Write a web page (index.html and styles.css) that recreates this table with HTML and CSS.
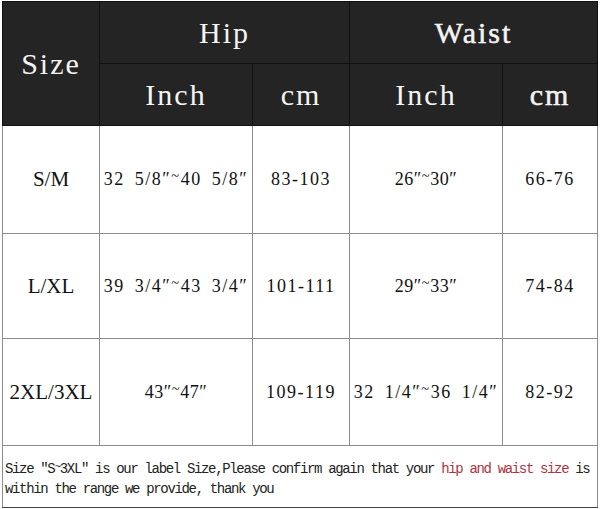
FILE: index.html
```html
<!DOCTYPE html>
<html>
<head>
<meta charset="utf-8">
<link rel="stylesheet" href="styles.css">
</head>
<body>
<table class="chart">
  <colgroup>
    <col class="c-size">
    <col class="c-inch">
    <col class="c-cm">
    <col class="c-inch">
    <col class="c-cm2">
  </colgroup>
  <thead>
    <tr class="h1">
      <th rowspan="2" class="hd">Size</th>
      <th colspan="2" class="hd">Hip</th>
      <th colspan="2" class="hd heavy">Waist</th>
    </tr>
    <tr class="h2">
      <th class="hd">Inch</th>
      <th class="hd">cm</th>
      <th class="hd">Inch</th>
      <th class="hd heavy">cm</th>
    </tr>
  </thead>
  <tbody>
    <tr class="r1">
      <td class="lbl">S/M</td>
      <td class="val">32 5/8″<span class="tl">~</span>40 5/8″</td>
      <td class="val">83-103</td>
      <td class="val short">26″<span class="tl">~</span>30″</td>
      <td class="val">66-76</td>
    </tr>
    <tr class="r2">
      <td class="lbl">L/XL</td>
      <td class="val">39 3/4″<span class="tl">~</span>43 3/4″</td>
      <td class="val">101-111</td>
      <td class="val short">29″<span class="tl">~</span>33″</td>
      <td class="val">74-84</td>
    </tr>
    <tr class="r3">
      <td class="lbl">2XL/3XL</td>
      <td class="val short">43″<span class="tl">~</span>47″</td>
      <td class="val">109-119</td>
      <td class="val">32 1/4″<span class="tl">~</span>36 1/4″</td>
      <td class="val">82-92</td>
    </tr>
    <tr class="foot">
      <td colspan="5" class="note">Size ″S<span class="tl">~</span>3XL″ is our label Size,Please confirm again that your <span class="red">hip and waist size</span> is<br>within the range we provide, thank you</td>
    </tr>
  </tbody>
</table>
</body>
</html>
```
FILE: styles.css
```css
html, body {
  margin: 0;
  padding: 0;
  background: #ffffff;
}
body {
  padding: 1px 0 0 2px;
}
.chart {
  border-collapse: collapse;
  table-layout: fixed;
  width: 595px;
  border: 1px solid #444;
  font-family: "Liberation Serif", serif;
  color: #111;
}
.c-size { width: 97px; }
.c-inch { width: 153px; }
.c-cm { width: 97px; }
.c-cm2 { width: 95px; }
.chart th, .chart td {
  padding: 0;
  text-align: center;
  vertical-align: middle;
}
.chart td {
  border: 1px solid #8c8c8c;
}
.hd {
  background: #242424;
  color: #f4f4f4;
  font-weight: normal;
  font-size: 30px;
  letter-spacing: 2px;
  border: 1px solid #101010;
  padding-top: 4px;
}
.heavy {
  -webkit-text-stroke: 0.5px #f4f4f4;
}
.h1 { height: 62px; }
.h2 { height: 62px; }
.r1 { height: 108px; }
.r2 { height: 105px; }
.r3 { height: 107px; }
.foot { height: 62px; }
.lbl {
  font-size: 21px;
}
.val {
  font-size: 18px;
  letter-spacing: 1.5px;
  word-spacing: 4px;
}
.val.short {
  letter-spacing: 0.5px;
}
.tl {
  vertical-align: 0.3em;
  font-size: 0.8em;
}
.chart td.note {
  text-align: left;
  font-family: "Liberation Mono", monospace;
  font-size: 14px;
  letter-spacing: -1.34px;
  line-height: 19px;
  padding: 4px 0 0 2px;
  color: #222;
  border-top: 1px solid #8c8c8c;
  border-bottom: 1px solid #444;
}
.red {
  color: #b0323f;
}
```
